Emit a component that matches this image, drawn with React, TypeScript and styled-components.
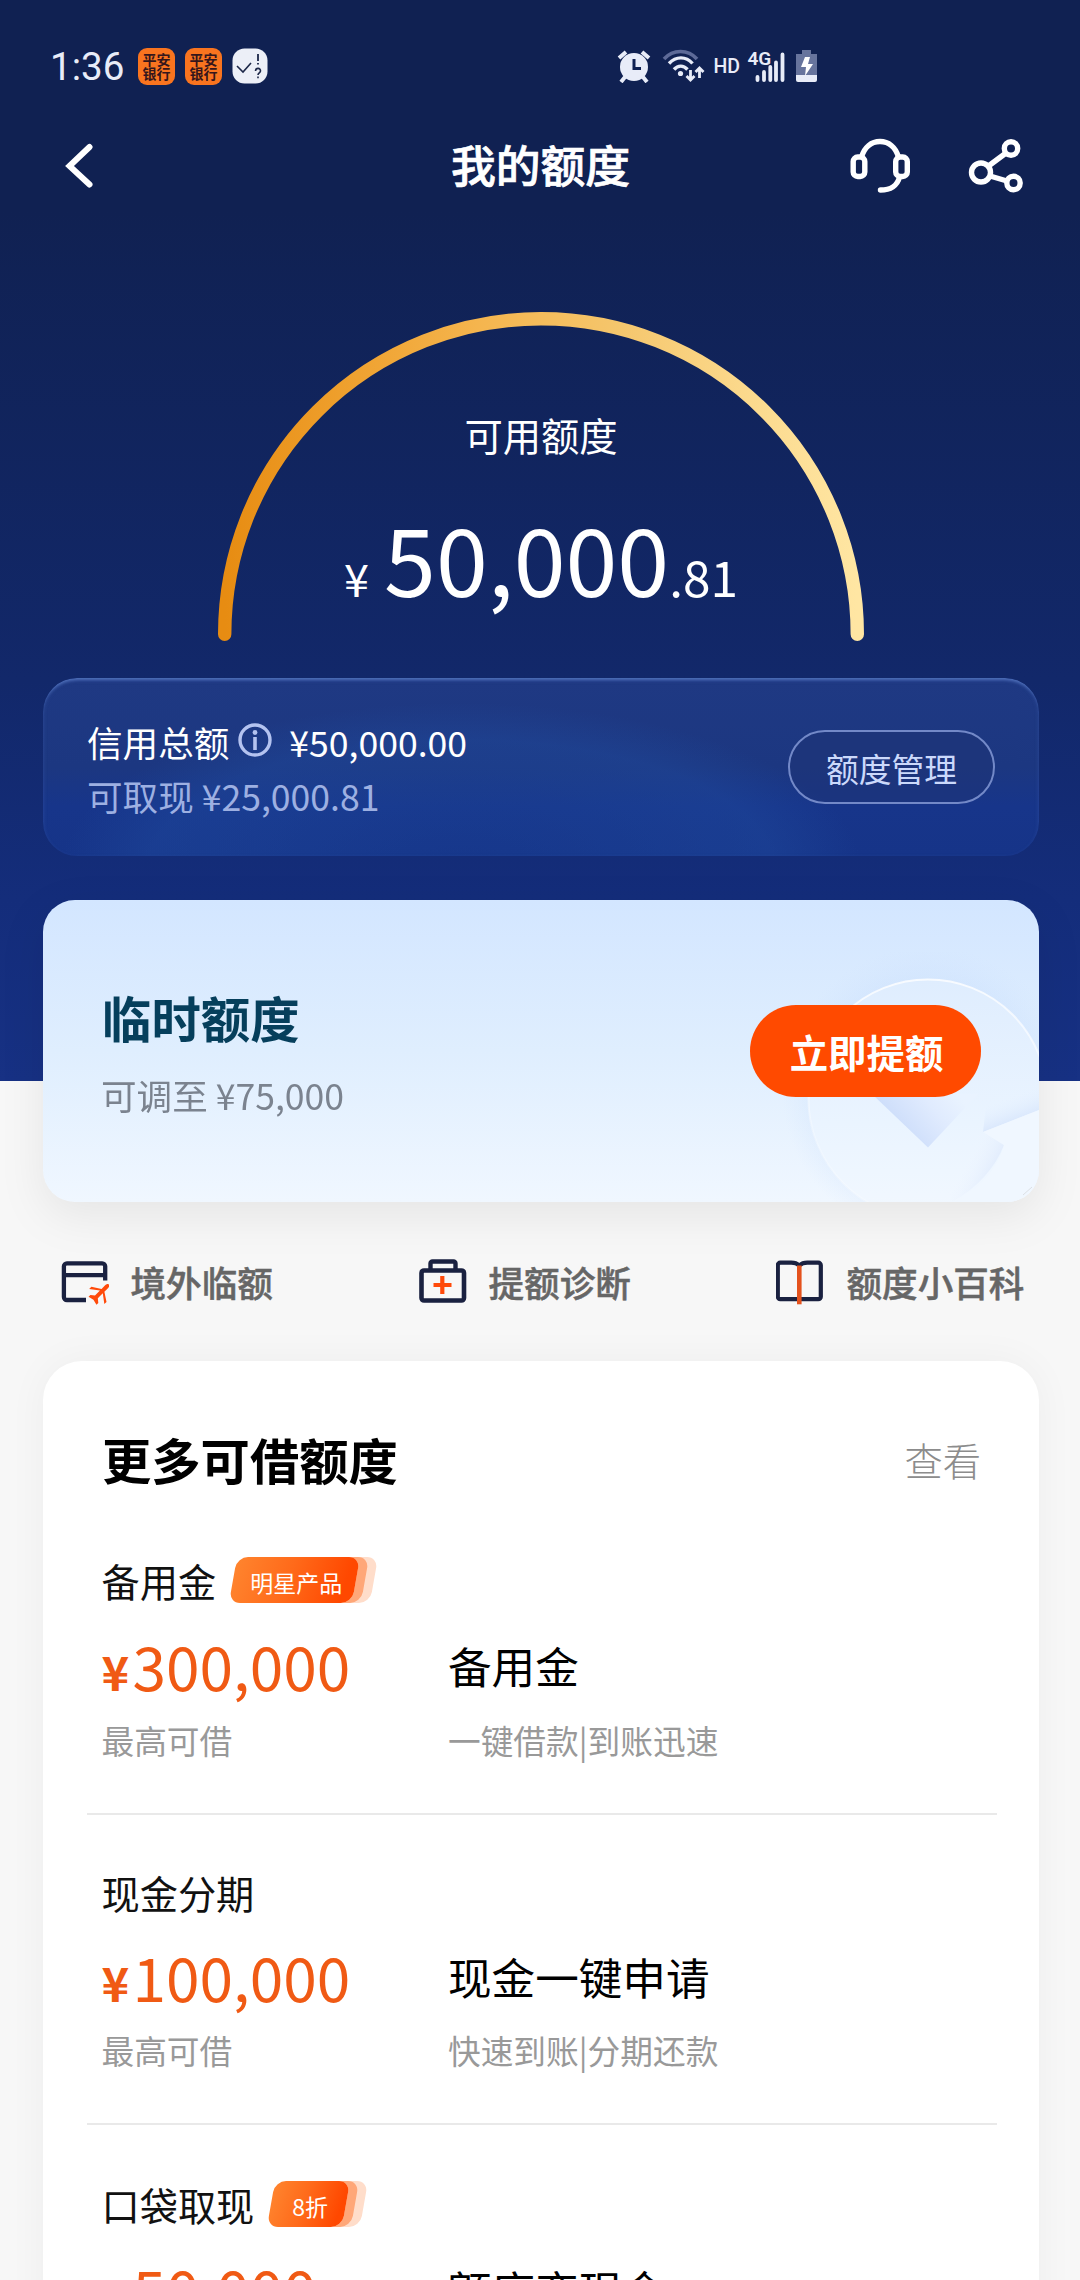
import React from "react";
import styled, { createGlobalStyle } from "styled-components";

const Global = createGlobalStyle`
  * { box-sizing: border-box; }
  html, body { margin: 0; padding: 0; background: #f7f7f7; }
  body {
    font-family: "Noto Sans CJK SC", "Noto Sans", sans-serif;
    -webkit-font-smoothing: antialiased;
  }
`;

const Screen = styled.main`
  width: 1080px;
  height: 2280px;
  overflow: hidden;
  display: flex;
  flex-direction: column;
  background: linear-gradient(180deg, #102152 0, #102152 210px, #12286a 680px, #142d7b 900px, #173184 1081px) 0 0 / 100% 1081px no-repeat #f7f7f7;
`;

/* status bar */
const StatusBar = styled.header`
  height: 132px;
  flex: none;
  display: flex;
  align-items: center;
  padding-left: 50px;
  color: #e8ecf8;
`;
const Clock = styled.span`
  width: 88px;
  padding-top: 2px;
  font: 400 38.6px/40px Roboto, sans-serif;
`;
const AppIcon = styled.span`
  width: 37px;
  height: 37px;
  margin-right: 10px;
  border-radius: 9px;
  background: #f9741f;
  color: #35161c;
  display: grid;
  grid-template-rows: 14px 14px;
  align-content: center;
  justify-content: center;
  font-size: 14px;
  font-weight: 700;
  line-height: 14px;
`;
const StatusIcons = styled.span`
  display: flex;
  align-items: center;
  margin: 0 0 3px 348px;
`;
const NoticeIcon = styled.svg`
  flex: none;
`;

/* navigation */
const NavBar = styled.nav`
  height: 68px;
  flex: none;
  display: grid;
  grid-template-columns: 1fr auto 1fr;
  align-items: center;
  padding: 0 56px 0 65px;
`;
const NavTitle = styled.h1`
  margin: 0 8px 4px 0;
  color: #fff;
  font-size: 44.8px;
  font-weight: 500;
  line-height: 60px;
  -webkit-text-stroke: 0.7px #fff;
`;
const NavActions = styled.div`
  display: flex;
  justify-content: flex-end;
  gap: 58px;
`;

/* gauge */
const Gauge = styled.section`
  display: grid;
  width: 646px;
  height: 329px;
  flex: none;
  margin: 112px 0 0 218px;
  > * { grid-area: 1 / 1; }
`;
const GaugeText = styled.div`
  padding-top: 104px;
  color: #fff;
  text-align: center;
`;
const GaugeLabel = styled.div`
  font-size: 38.3px;
  line-height: 38px;
`;
const GaugeAmount = styled.div`
  margin-top: 56px;
  display: flex;
  align-items: baseline;
  justify-content: center;
  line-height: 94px;
`;
const Digits = styled.span<{ $size: number; $gap?: number }>`
  font-size: ${(p) => p.$size}px;
  line-height: 1;
  margin-right: ${(p) => p.$gap ?? 0}px;
`;

/* credit panel */
const CreditPanel = styled.section`
  flex: none;
  width: 996px;
  height: 178px;
  margin: 37px 0 0 43px;
  padding: 0 44px;
  border-radius: 34px;
  display: flex;
  justify-content: space-between;
  align-items: flex-start;
  background:
    radial-gradient(ellipse 400px 165px at 418px 190px, rgba(24, 66, 150, 0.2) 0, rgba(32, 76, 160, 0.38) 78%, rgba(32, 78, 160, 0) 100%),
    linear-gradient(180deg, #1f3983 0, #1c3781 50%, #17358a 72%, #163488 100%);
  box-shadow: inset 0 4px 3px -2px rgba(110, 145, 220, 0.5), inset 0 2px 4px rgba(90, 125, 205, 0.3);
`;
const CreditLines = styled.div`
  padding-top: 37px;
  font-size: 35.6px;
`;
const CreditLine = styled.div<{ $dim?: boolean }>`
  display: flex;
  align-items: center;
  height: 53.7px;
  line-height: 53.7px;
  white-space: pre;
  color: ${(p) => (p.$dim ? "#9db0e2" : "#fff")};
`;
const InfoIcon = styled.svg`
  margin: 0 17px 4px 9px;
`;
const ManageButton = styled.button`
  width: 207px;
  height: 74px;
  margin: 52px 0 0;
  padding: 3px 0 0;
  border: 2px solid #7389c8;
  border-radius: 37px;
  background: rgba(30, 50, 115, 0.45);
  color: #cbd9fb;
  font: 400 32.8px/1 "Noto Sans CJK SC", sans-serif;
`;

/* temporary limit card */
const TempCard = styled.section`
  flex: none;
  position: relative;
  width: 996px;
  height: 302px;
  margin: 44px 0 0 43px;
  padding: 0 58px 0 59px;
  border-radius: 32px;
  overflow: hidden;
  display: flex;
  justify-content: space-between;
  background: linear-gradient(180deg, #d3e6ff 0, #dfeefe 50%, #f0f7ff 100%);
`;
const TempShadow = styled.div`
  flex: none;
  border-radius: 32px;
  filter: drop-shadow(0 14px 22px rgba(0, 0, 0, 0.07));
`;
const TempArt = styled.svg`
  position: absolute;
  right: 0;
  bottom: 0;
`;
const TempTitle = styled.h2`
  margin: 87px 0 0;
  color: #063f5c;
  font-size: 49.4px;
  font-weight: 700;
  line-height: 60px;
`;
const TempSub = styled.p`
  margin: 23px 0 0 -1px;
  color: #7b838f;
  font-size: 35.6px;
  line-height: 50px;
`;
const RaiseButton = styled.button`
  position: relative;
  width: 231px;
  height: 92px;
  margin: 105px 0 0;
  padding: 0 0 0 2px;
  border: 0;
  border-radius: 46px;
  background: #ff4a00;
  color: #fff;
  font: 700 38.4px/1 "Noto Sans CJK SC", sans-serif;
`;

/* shortcuts */
const Shortcuts = styled.section`
  flex: none;
  height: 159px;
  padding-left: 61px;
  display: grid;
  grid-template-columns: 358px 356.5px auto;
  align-items: center;
`;
const Shortcut = styled.div<{ $gap?: number }>`
  display: flex;
  align-items: center;
  gap: ${(p) => p.$gap ?? 21.5}px;
  color: #666;
  font-size: 35.6px;
  font-weight: 500;
  line-height: 50px;
  -webkit-text-stroke: 0.5px #666;
`;

/* product list */
const ListCard = styled.section`
  flex: none;
  width: 996px;
  margin-left: 43px;
  padding: 68px 42px 0 44px;
  height: 1000px;
  border-radius: 39px;
  background: #fff;
  box-shadow: 0 0 40px rgba(0, 0, 0, 0.045);
`;
const ListHead = styled.div`
  height: 60px;
  margin-bottom: 68px;
  padding: 0 16px 0 15px;
  display: flex;
  align-items: center;
  justify-content: space-between;
`;
const ListTitle = styled.h2`
  margin: 0;
  font-size: 49.3px;
  font-weight: 700;
  line-height: 60px;
  color: #000;
`;
const ListMore = styled.span`
  color: #8c8c8c;
  font-size: 38.3px;
  font-weight: 300;
`;
const Product = styled.article`
  padding: 0 15px 57px 14.5px;
  & + & {
    border-top: 2px solid #e9e9e9;
    padding-top: 56px;
  }
`;
const ProductHead = styled.div<{ $tall: boolean }>`
  height: ${(p) => (p.$tall ? 46 : 43)}px;
  display: flex;
  align-items: center;
  font-size: 38.2px;
  line-height: 43px;
  color: #111;
`;
const ProductBody = styled.div`
  margin-top: 32px;
  display: grid;
  grid-template-columns: 346.5px 1fr;
  grid-template-rows: 60px 33px;
  row-gap: 27.5px;
  align-items: center;
`;
const ProductAmount = styled.div`
  display: flex;
  align-items: baseline;
  color: #f05a14;
  font-size: 60.4px;
  line-height: 60px;
`;
const Yen = styled.span`
  width: 31px;
  font-size: 47px;
  font-weight: 700;
  line-height: 1;
`;
const ProductName = styled.div`
  color: #000;
  font-size: 43.6px;
  line-height: 60px;
`;
const ProductNote = styled.div`
  color: #999;
  font-size: 32.7px;
  line-height: 33px;
`;
const Badge = styled.span<{ $width: number }>`
  width: ${(p) => p.$width}px;
  height: 46px;
  margin-left: 17px;
  border-radius: 11px;
  transform: skewX(-10deg);
  background: linear-gradient(100deg, #ff842e 0, #ff6a1a 45%, #ff4800 90%);
  box-shadow: 9px 0 0 #ffa778, 18px 0 0 #ffddca;
`;
const BadgeText = styled.span`
  display: block;
  padding: 0 0 0 4px;
  transform: skewX(10deg);
  color: #fff;
  font-size: 23px;
  line-height: 50px;
  text-align: center;
`;

const NoticeGlyph = () => (
  <NoticeIcon width="36" height="36" viewBox="0 0 36 36" fill="none">
    <rect x="0.5" y="0.5" width="35" height="35" rx="12" fill="#eceff7" />
    <path d="M5 18l6 6 8-9" stroke="#1c2748" strokeWidth="1.6" />
    <path d="M26 6v7M26 15v1.6" stroke="#1c2748" strokeWidth="1.8" />
    <path d="M23.5 23c.2-3.6 5.200-3.400 5 0-.1 1.800-2.500 2-2.500 4M26 28.600v1.600" stroke="#1c2748" strokeWidth="1.600" />
  </NoticeIcon>
);

const StatusGlyphs = () => (
  <svg width="202" height="36" viewBox="616 46 202 36" fill="none">
    <circle cx="634" cy="66" r="14" fill="#e8ecf8" />
    <path d="M634 58v9.500h7" stroke="#102152" strokeWidth="3" />
    <path d="M619 57l7-6M649 57l-7-6M625 76l-4 5M643 76l4 5" stroke="#e8ecf8" strokeWidth="4" />
    <path d="M664 58c9-10 24-10 33 0" stroke="#5d6a98" strokeWidth="3.600" />
    <path d="M669 62.500c7-7.500 17-7.500 23.500 0M674 68.500c4-4.500 9.500-4.500 13.500 0" stroke="#e8ecf8" strokeWidth="3.400" />
    <circle cx="680.500" cy="72.500" r="2.600" fill="#e8ecf8" />
    <path d="M690.500 69v9.500M686.500 75l4 4 4-4M699.500 77v-9.500M695.500 71l4-4 4 4" stroke="#e8ecf8" strokeWidth="2.800" />
    <text x="713.500" y="72" fill="#e8ecf8" fontFamily="Roboto" fontWeight="500" fontSize="19.500">HD</text>
    <text x="747.500" y="63.500" fill="#e8ecf8" fontFamily="Roboto" fontWeight="600" fontSize="19">4G</text>
    <path d="M757.500 76v3M764 71v8M770.300 66v13M776 61.500v17.500M782.500 53.500v25.500" stroke="#e8ecf8" strokeWidth="3.800" strokeLinecap="round" />
    <path d="M802 49h9v4h6v21h-21V53h6z" fill="#67749d" />
    <path d="M796 74h21v5a2 2 0 0 1-2 2h-17a2 2 0 0 1-2-2z" fill="#e8ecf8" />
    <path d="M805 56h5l-2 7h5l-8 12 1-9h-5z" fill="#fff" />
  </svg>
);

const BackGlyph = () => (
  <svg width="28" height="46" viewBox="65 143 28 46" fill="none">
    <path d="M89.500 147L69.500 166L89.500 184.500" stroke="#fff" strokeWidth="6" strokeLinecap="round" />
  </svg>
);

const HeadsetGlyph = () => (
  <svg width="60" height="56" viewBox="850 138 60 56" fill="none" stroke="#fff" strokeWidth="5.400">
    <rect x="853.200" y="157" width="11.600" height="19.500" rx="4.500" />
    <rect x="895.700" y="157" width="11.600" height="19.500" rx="4.500" />
    <path d="M861.500 157c3-10 10-15.500 18.500-15.500s15.500 5.500 18.500 15.500" />
    <path d="M899.500 177c-2 8.500-9 13-19 13" strokeLinecap="round" />
  </svg>
);

const ShareGlyph = () => (
  <svg width="56" height="56" viewBox="968 138 56 56" fill="none" stroke="#fff" strokeWidth="5.400">
    <circle cx="981" cy="172.500" r="9.500" />
    <circle cx="1011" cy="148.500" r="6.700" />
    <circle cx="1013.500" cy="183" r="6.700" />
    <path d="M988.500 166L1006 153M990 176L1007 181" />
  </svg>
);

const ArcGlyph = () => (
  <svg width="646" height="329" viewBox="0 0 646 329" fill="none">
    <defs>
      <linearGradient id="arc" x1="0" y1="0" x2="1" y2="0">
        <stop offset="0" stopColor="#e78c12" />
        <stop offset="0.180" stopColor="#ee9f2c" />
        <stop offset="0.400" stopColor="#f5b54e" />
        <stop offset="0.620" stopColor="#f5c66c" />
        <stop offset="0.820" stopColor="#fbd98c" />
        <stop offset="1" stopColor="#ffe6a3" />
      </linearGradient>
    </defs>
    <path d="M6.700 322.300A316.300 315.600 0 0 1 639.300 322.300" stroke="url(#arc)" strokeWidth="13.400" strokeLinecap="round" />
  </svg>
);

const CoinArt = () => (
  <TempArt width="260" height="250" viewBox="779 952 260 250" fill="none">
    <defs>
      <radialGradient id="halo" cx="0.5" cy="0.5" r="0.5">
        <stop offset="0.75" stopColor="#c6dcfc" stopOpacity="0.32" />
        <stop offset="1" stopColor="#cfe2fd" stopOpacity="0" />
      </radialGradient>
      <linearGradient id="coin" x1="0" y1="0" x2="0" y2="1">
        <stop offset="0" stopColor="#dfedfe" />
        <stop offset="0.6" stopColor="#eaf4ff" />
        <stop offset="1" stopColor="#f2f8ff" />
      </linearGradient>
      <linearGradient id="rim" x1="0" y1="0" x2="0" y2="1">
        <stop offset="0" stopColor="#fff" stopOpacity="0.8" />
        <stop offset="0.7" stopColor="#fff" stopOpacity="0.25" />
        <stop offset="1" stopColor="#fff" stopOpacity="0.3" />
      </linearGradient>
      <linearGradient id="fold" x1="895" y1="1130" x2="950" y2="1085" gradientUnits="userSpaceOnUse">
        <stop offset="0" stopColor="#cbdcfa" />
        <stop offset="0.6" stopColor="#e0ebfe" />
        <stop offset="1" stopColor="#e9f3ff" />
      </linearGradient>
      <linearGradient id="wing" x1="1016" y1="1122" x2="1007" y2="1098" gradientUnits="userSpaceOnUse">
        <stop offset="0" stopColor="#d8e6fc" />
        <stop offset="1" stopColor="#e6f1ff" stopOpacity="0" />
      </linearGradient>
      <linearGradient id="edge" x1="1000" y1="1165" x2="970" y2="1150" gradientUnits="userSpaceOnUse">
        <stop offset="0" stopColor="#dfeafc" />
        <stop offset="1" stopColor="#eff6ff" stopOpacity="0" />
      </linearGradient>
    </defs>
    <circle cx="928" cy="1092" r="146" fill="url(#halo)" />
    <circle cx="928" cy="1099" r="119.500" fill="url(#coin)" stroke="url(#rim)" strokeWidth="2" />
    <path d="M872 1094h106l-50 53.500z" fill="url(#fold)" />
    <path d="M983 1132l56-22v-60l-50 30z" fill="url(#wing)" />
    <path d="M983 1132l21 13c-9 23-27 43-52 57l-12-50z" fill="url(#edge)" />
    <path d="M983 1132l56-22v92h-85c27-14 43-33 50-57z" fill="#f0f7ff" />
    <path d="M1032 1187l-9 8" stroke="#dcdfe4" strokeWidth="1" />
  </TempArt>
);

const AbroadGlyph = () => (
  <svg width="48" height="46" viewBox="61 1258 48 46" fill="none">
    <path d="M86 1299H66.900a3 3 0 0 1-3-3V1265.300a3 3 0 0 1 3-3H102.200a3 3 0 0 1 3 3V1279.500M63.900 1274.200H105.200" stroke="#1a2140" strokeWidth="4.300" />
    <path transform="translate(99.800 1292.500) rotate(45)" d="M0-12.700c1.400 0 2 1.600 2 3.200v5l8.700 5.700v3.100L2-2.200v0 7l3.600 2.900v2.600L0 9l-5.600 1.300v-2.600L-2 4.800v-7l-8.700 6.500v-3.100L-2-4.500v-5c0-1.600.6-3.200 2-3.200z" fill="#ff4a0a" />
  </svg>
);

const KitGlyph = () => (
  <svg width="48" height="46" viewBox="419 1258 48 46" fill="none">
    <rect x="421.500" y="1269.500" width="42.500" height="30" rx="2.500" stroke="#1a2140" strokeWidth="4.600" />
    <path d="M430.500 1268v-5.500a2 2 0 0 1 2-2h21a2 2 0 0 1 2 2v5.500" stroke="#1a2140" strokeWidth="4.400" />
    <path d="M442.300 1275v18M433.500 1284h18" stroke="#ff4a0a" strokeWidth="4.200" />
  </svg>
);

const BookGlyph = () => (
  <svg width="48" height="46" viewBox="776 1259.500 48 46" fill="none">
    <path d="M799.300 1266c-2-1.800-5-2.800-8-2.800h-11a2.500 2.500 0 0 0-2.500 2.500v31.500a2.500 2.500 0 0 0 2.500 2.500h19M799.300 1266c2-1.800 5-2.800 8-2.800h11a2.500 2.500 0 0 1 2.500 2.500v31.500a2.500 2.500 0 0 1-2.500 2.500h-19" stroke="#1a2140" strokeWidth="4.200" />
    <path d="M799.300 1266v38.800" stroke="#e4521d" strokeWidth="4.600" />
  </svg>
);

const PinganIcon = () => (
  <AppIcon>
    <span>平安</span>
    <span>银行</span>
  </AppIcon>
);

const products = [
  { title: "备用金", badge: "明星产品", badgeWidth: 123, amount: "300,000", name: "备用金", note: "一键借款|到账迅速" },
  { title: "现金分期", amount: "100,000", name: "现金一键申请", note: "快速到账|分期还款" },
  { title: "口袋取现", badge: "8折", badgeWidth: 75, amount: "50,000", name: "额度变现金", note: "" },
];

export default function App() {
  return (
    <Screen>
      <Global />
      <StatusBar>
        <Clock>1:36</Clock>
        <PinganIcon />
        <PinganIcon />
        <NoticeGlyph />
        <StatusIcons><StatusGlyphs /></StatusIcons>
      </StatusBar>
      <NavBar>
        <BackGlyph />
        <NavTitle>我的额度</NavTitle>
        <NavActions>
          <HeadsetGlyph />
          <ShareGlyph />
        </NavActions>
      </NavBar>
      <Gauge>
        <ArcGlyph />
        <GaugeText>
          <GaugeLabel>可用额度</GaugeLabel>
          <GaugeAmount>
            <Digits $size={45} $gap={15}>¥</Digits>
            <Digits $size={93.4}>50,000</Digits>
            <Digits $size={49.5}>.81</Digits>
          </GaugeAmount>
        </GaugeText>
      </Gauge>
      <CreditPanel>
        <CreditLines>
          <CreditLine>
            信用总额
            <InfoIcon width="34" height="34" viewBox="0 0 34 34" fill="none">
              <circle cx="17" cy="17" r="15" stroke="#b4c3f0" strokeWidth="3.400" />
              <circle cx="17" cy="9.500" r="2.400" fill="#b4c3f0" />
              <path d="M17 14v13" stroke="#b4c3f0" strokeWidth="3.600" />
            </InfoIcon>
            ¥50,000.00
          </CreditLine>
          <CreditLine $dim>可取现 ¥25,000.81</CreditLine>
        </CreditLines>
        <ManageButton>额度管理</ManageButton>
      </CreditPanel>
      <TempShadow>
        <TempCard>
          <CoinArt />
          <div>
            <TempTitle>临时额度</TempTitle>
            <TempSub>可调至 ¥75,000</TempSub>
          </div>
          <RaiseButton>立即提额</RaiseButton>
        </TempCard>
      </TempShadow>
      <Shortcuts>
        <Shortcut><AbroadGlyph />境外临额</Shortcut>
        <Shortcut><KitGlyph />提额诊断</Shortcut>
        <Shortcut $gap={23}><BookGlyph />额度小百科</Shortcut>
      </Shortcuts>
      <ListCard>
        <ListHead>
          <ListTitle>更多可借额度</ListTitle>
          <ListMore>查看</ListMore>
        </ListHead>
        {products.map((p) => (
          <Product key={p.title}>
            <ProductHead $tall={Boolean(p.badge)}>
              {p.title}
              {p.badge && (
                <Badge $width={p.badgeWidth ?? 0}>
                  <BadgeText>{p.badge}</BadgeText>
                </Badge>
              )}
            </ProductHead>
            <ProductBody>
              <ProductAmount><Yen>¥</Yen>{p.amount}</ProductAmount>
              <ProductName>{p.name}</ProductName>
              {p.note && <ProductNote>最高可借</ProductNote>}
              {p.note && <ProductNote>{p.note}</ProductNote>}
            </ProductBody>
          </Product>
        ))}
      </ListCard>
    </Screen>
  );
}
